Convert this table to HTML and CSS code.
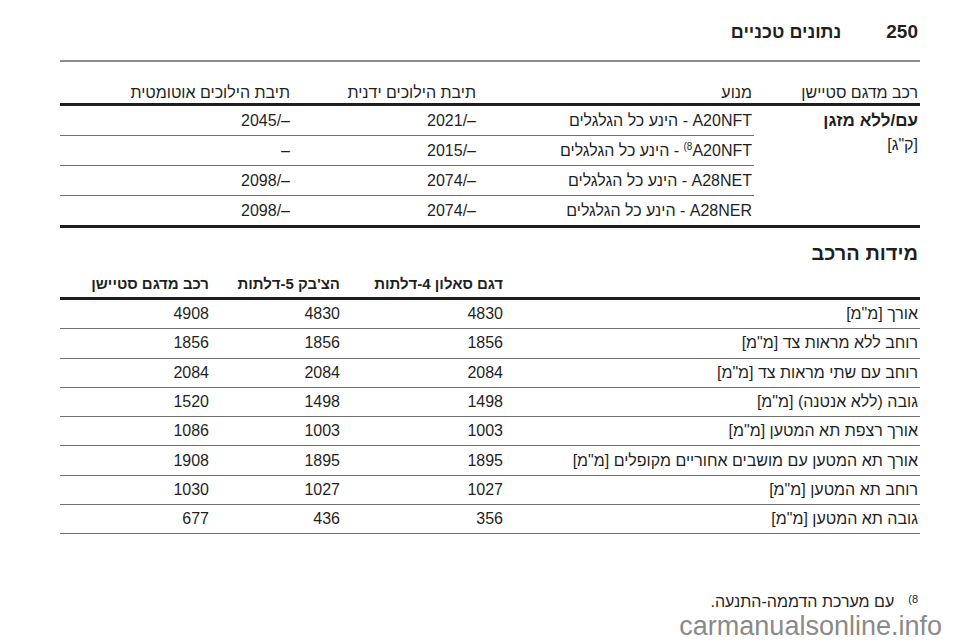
FILE: index.html
```html
<!DOCTYPE html>
<html lang="he" dir="rtl">
<head>
<meta charset="utf-8">
<title>נתונים טכניים</title>
<link rel="stylesheet" href="styles.css">
</head>
<body>
<div class="page">
  <header class="top">
    <span class="page-no">250</span>
    <span class="chapter">נתונים טכניים</span>
  </header>

  <table class="spec weights">
    <colgroup>
      <col class="w-c1"><col class="w-c2"><col class="w-c3"><col class="w-c4">
    </colgroup>
    <thead>
      <tr>
        <th>רכב מדגם סטיישן</th>
        <th>מנוע</th>
        <th>תיבת הילוכים ידנית</th>
        <th>תיבת הילוכים אוטומטית</th>
      </tr>
    </thead>
    <tbody>
      <tr>
        <td rowspan="4" class="group">
          <div class="group-title">עם/ללא מזגן</div>
          <div class="group-unit">[ק"ג]</div>
        </td>
        <td><span class="ltr">A20NFT</span> - הינע כל הגלגלים</td>
        <td><span class="ltr">2021/–</span></td>
        <td><span class="ltr">2045/–</span></td>
      </tr>
      <tr>
        <td><span class="ltr"><sup>(8</sup>A20NFT</span> - הינע כל הגלגלים</td>
        <td><span class="ltr">2015/–</span></td>
        <td>–</td>
      </tr>
      <tr>
        <td><span class="ltr">A28NET</span> - הינע כל הגלגלים</td>
        <td><span class="ltr">2074/–</span></td>
        <td><span class="ltr">2098/–</span></td>
      </tr>
      <tr class="last">
        <td><span class="ltr">A28NER</span> - הינע כל הגלגלים</td>
        <td><span class="ltr">2074/–</span></td>
        <td><span class="ltr">2098/–</span></td>
      </tr>
    </tbody>
  </table>

  <h2 class="section-title">מידות הרכב</h2>

  <table class="spec dims">
    <colgroup>
      <col class="d-c1"><col class="d-c2"><col class="d-c3"><col class="d-c4">
    </colgroup>
    <thead>
      <tr>
        <th></th>
        <th>דגם סאלון 4-דלתות</th>
        <th>הצ'בק 5-דלתות</th>
        <th>רכב מדגם סטיישן</th>
      </tr>
    </thead>
    <tbody>
      <tr><td>אורך [מ"מ]</td><td>4830</td><td>4830</td><td>4908</td></tr>
      <tr><td>רוחב ללא מראות צד [מ"מ]</td><td>1856</td><td>1856</td><td>1856</td></tr>
      <tr><td>רוחב עם שתי מראות צד [מ"מ]</td><td>2084</td><td>2084</td><td>2084</td></tr>
      <tr><td>גובה (ללא אנטנה) [מ"מ]</td><td>1498</td><td>1498</td><td>1520</td></tr>
      <tr><td>אורך רצפת תא המטען [מ"מ]</td><td>1003</td><td>1003</td><td>1086</td></tr>
      <tr><td>אורך תא המטען עם מושבים אחוריים מקופלים [מ"מ]</td><td>1895</td><td>1895</td><td>1908</td></tr>
      <tr><td>רוחב תא המטען [מ"מ]</td><td>1027</td><td>1027</td><td>1030</td></tr>
      <tr><td>גובה תא המטען [מ"מ]</td><td>356</td><td>436</td><td>677</td></tr>
    </tbody>
  </table>

  <div class="footnote">
    <span class="fn-mark ltr">(8</span>
    <span class="fn-text">עם מערכת הדממה-התנעה.</span>
  </div>
</div>
<div class="watermark">carmanualsonline.info</div>
</body>
</html>
```

FILE: styles.css
```css
html, body {
  margin: 0;
  padding: 0;
  background: #ffffff;
}

body {
  font-family: "Liberation Sans", Arial, "DejaVu Sans", sans-serif;
  color: #1f1f1f;
  width: 960px;
  height: 642px;
  position: relative;
  overflow: hidden;
}

.page {
  padding: 0 40px 0 60px;
}

.ltr {
  direction: ltr;
  unicode-bidi: isolate;
}

.top {
  display: flex;
  align-items: center;
  gap: 45px;
  height: 56px;
  padding: 4px 2px 0 0;
  border-bottom: 2px solid #8a8a8a;
  font-weight: bold;
}

.page-no {
  font-size: 19px;
}

.chapter {
  font-size: 18px;
}

.spec {
  width: 860px;
  border-collapse: collapse;
  table-layout: fixed;
  font-size: 16px;
}

.spec th,
.spec td {
  text-align: right;
  padding: 0 2px 0 0;
  white-space: nowrap;
}

.spec th {
  font-weight: normal;
  vertical-align: bottom;
  line-height: 18px;
  border-bottom: 3px solid #1e1e1e;
}

.spec td {
  vertical-align: middle;
  line-height: 18px;
  border-bottom: 1px solid #707070;
}

/* weights table */
.w-c1 { width: 166px; }
.w-c2 { width: 276px; }
.w-c3 { width: 186px; }
.w-c4 { width: 232px; }

.weights th {
  height: 40px;
  padding-bottom: 1px;
}

.weights td {
  height: 29px;
}

.weights tr.last td,
.weights td.group {
  border-bottom: 3px solid #1e1e1e;
}

.weights td.group {
  vertical-align: top;
  padding-top: 5px;
}

.group-title {
  font-weight: bold;
  font-size: 17px;
  line-height: 20px;
}

.group-unit {
  line-height: 20px;
  margin-top: 4px;
}

sup {
  font-size: 10px;
  vertical-align: 6px;
  line-height: 0;
}

.section-title {
  margin: 11px 0 0 0;
  padding-right: 2px;
  font-size: 20px;
  line-height: 28px;
  font-weight: bold;
}

/* dimensions table */
.d-c1 { width: 415px; }
.d-c2 { width: 163px; }
.d-c3 { width: 131px; }
.d-c4 { width: 151px; }

.dims th {
  font-weight: bold;
  font-size: 15px;
  height: 26px;
  padding-bottom: 4px;
}

.dims td {
  height: 28.3px;
}

.footnote {
  display: flex;
  align-items: flex-start;
  gap: 14px;
  margin-top: 58px;
  padding-right: 2px;
  font-size: 16px;
  line-height: 20px;
}

.fn-mark {
  font-size: 11px;
  line-height: 14px;
}

.watermark {
  position: absolute;
  right: 18px;
  bottom: 1px;
  direction: ltr;
  font-family: "Liberation Sans", Arial, sans-serif;
  font-size: 27px;
  line-height: 30px;
  color: #8a8a8a;
}
```
